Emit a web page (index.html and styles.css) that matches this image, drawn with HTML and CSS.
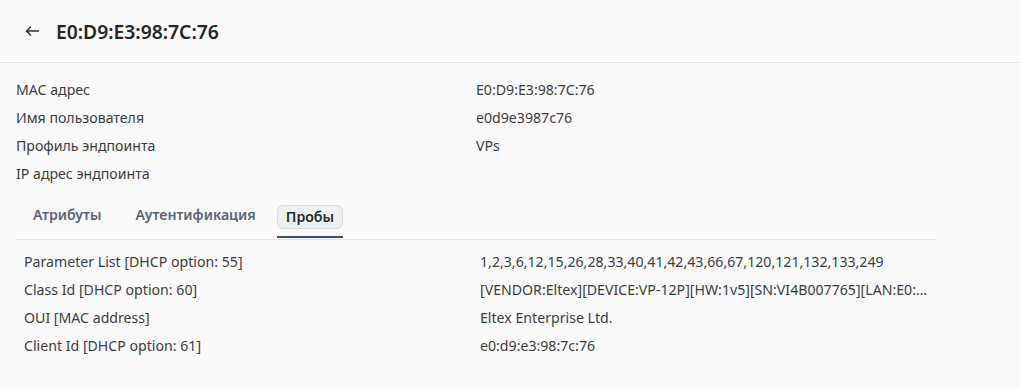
FILE: index.html
```html
<!DOCTYPE html>
<html lang="ru">
<head>
    <meta charset="UTF-8">
    <title>E0:D9:E3:98:7C:76</title>
    <link rel="stylesheet" href="styles.css">
</head>
<body>
    <header class="page-header">
        <button class="back-btn" type="button" aria-label="Назад">
            <svg width="16" height="16" viewBox="0 0 16 16">
                <path d="M15 8H2.5M7 3.5L2.5 8L7 12.5" fill="none" stroke="#2f333a" stroke-width="1.5"/>
            </svg>
        </button>
        <h1 class="title">E0:D9:E3:98:7C:76</h1>
    </header>

    <main class="content">
        <dl class="info">
            <div class="info-row"><dt>MAC адрес</dt><dd>E0:D9:E3:98:7C:76</dd></div>
            <div class="info-row"><dt>Имя пользователя</dt><dd>e0d9e3987c76</dd></div>
            <div class="info-row"><dt>Профиль эндпоинта</dt><dd>VPs</dd></div>
            <div class="info-row"><dt>IP адрес эндпоинта</dt><dd></dd></div>
        </dl>

        <nav class="tabs">
            <a class="tab">Атрибуты</a>
            <a class="tab">Аутентификация</a>
            <a class="tab active"><span>Пробы</span></a>
        </nav>

        <div class="probes">
            <div class="probe-row"><div>Parameter List [DHCP option: 55]</div><div>1,2,3,6,12,15,26,28,33,40,41,42,43,66,67,120,121,132,133,249</div></div>
            <div class="probe-row"><div>Class Id [DHCP option: 60]</div><div>[VENDOR:Eltex][DEVICE:VP-12P][HW:1v5][SN:VI4B007765][LAN:E0:D9:E3:98:7C:76][WAN:E0:D9:E3:98:7C:77]</div></div>
            <div class="probe-row"><div>OUI [MAC address]</div><div>Eltex Enterprise Ltd.</div></div>
            <div class="probe-row"><div>Client Id [DHCP option: 61]</div><div>e0:d9:e3:98:7c:76</div></div>
        </div>
    </main>
</body>
</html>
```

FILE: styles.css
```css
body {
    margin: 0;
    background: #fafafa;
    font-family: "Noto Sans", "Open Sans", sans-serif;
    font-size: 14.15px;
    color: #3a3d42;
}

.page-header {
    display: flex;
    align-items: center;
    height: 62px;
    padding: 0 16px;
    border-bottom: 1px solid #e6e7e9;
}

.back-btn {
    display: flex;
    align-items: center;
    justify-content: center;
    width: 32px;
    height: 32px;
    padding: 0;
    margin-right: 8px;
    border: none;
    background: none;
    cursor: pointer;
}

.title {
    margin: 0;
    font-size: 19.3px;
    font-weight: 600;
    color: #23262c;
}

.content {
    padding: 12px 16px 0;
}

.info {
    margin: 0;
}

.info-row {
    display: grid;
    grid-template-columns: 460px 1fr;
    height: 28px;
    align-items: center;
}

.info dt,
.info dd {
    margin: 0;
}

.tabs {
    display: flex;
    width: 920px;
    margin-top: 14px;
    border-bottom: 1px solid #e4e5e8;
}

.tab {
    height: 38px;
    display: flex;
    align-items: flex-start;
    padding: 4px 17px 0;
    box-sizing: border-box;
    color: #5b6373;
    font-weight: 600;
    cursor: pointer;
}

.tab.active {
    margin-left: 4px;
    padding: 4px 0 0;
    border-bottom: 2px solid #2d4f95;
    height: 37px;
    margin-bottom: -1px;
    color: #25282d;
}

.tab.active span {
    padding: 0 8px;
    height: 22px;
    line-height: 22px;
    border: 1px solid #d9dbdf;
    border-radius: 6px;
    background: #eeeff1;
}

.probes {
    width: 920px;
    margin-top: 7px;
}

.probe-row {
    display: grid;
    grid-template-columns: 448px 1fr;
    column-gap: 8px;
    height: 28px;
    align-items: center;
    padding-left: 8px;
}

.probe-row div {
    min-width: 0;
    white-space: nowrap;
    overflow: hidden;
    text-overflow: ellipsis;
}
```
